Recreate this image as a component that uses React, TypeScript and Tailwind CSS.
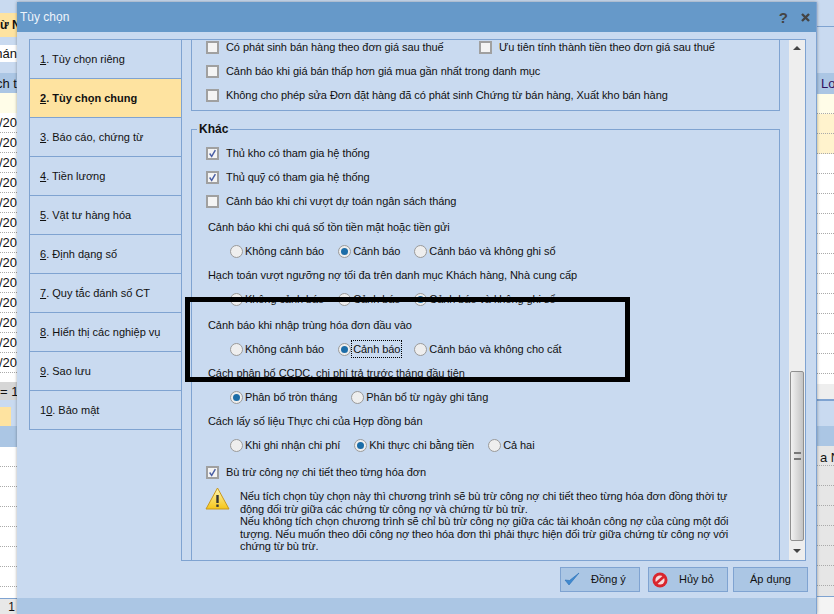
const font = "font-['Liberation_Sans',Arial,sans-serif]"

const navItems = [
  ['1', '. Tùy chọn riêng'],
  ['2', '. Tùy chọn chung'],
  ['3', '. Báo cáo, chứng từ'],
  ['4', '. Tiền lương'],
  ['5', '. Vật tư hàng hóa'],
  ['6', '. Định dạng số'],
  ['7', '. Quy tắc đánh số CT'],
  ['8', '. Hiển thị các nghiệp vụ'],
  ['9', '. Sao lưu'],
]

const Check = ({ on, label, className = '' }: { on?: boolean; label: string; className?: string }) => (
  <div className={`flex items-center h-6 ${className}`}>
    <span className="w-[13px] h-[13px] border-2 border-[#a0a0a0] bg-[#f4f4f4] flex items-center justify-center shrink-0">
      {on && (
        <svg width="11" height="11" viewBox="0 0 11 11">
          <path d="M2 5.5 L4.5 9 L9 1.5" fill="none" stroke="#4a5fa5" strokeWidth="1.8" />
        </svg>
      )}
    </span>
    <span className="ml-[7px] whitespace-nowrap tracking-[-0.07px]">{label}</span>
  </div>
)

const Radio = ({ on, label, focus }: { on?: boolean; label: string; focus?: boolean }) => (
  <div className="flex items-center">
    <span className="w-[13px] h-[13px] rounded-full border border-[#9a9a9a] bg-[#eeeeee] flex items-center justify-center shrink-0">
      {on && <span className="w-[7px] h-[7px] rounded-full bg-[#1c6da8]" />}
    </span>
    <span className={`ml-[1px] px-[1px] whitespace-nowrap tracking-[-0.07px] ${focus ? 'outline-1 outline-dotted outline-black' : ''}`}>{label}</span>
  </div>
)

const RadioRow = ({ children }: { children: React.ReactNode }) => (
  <div className="flex items-center h-6 pl-[38px] gap-[13px]">{children}</div>
)

const Caption = ({ text }: { text: string }) => <div className="h-6 flex items-center pl-[16px] whitespace-nowrap tracking-[-0.07px]">{text}</div>

const DottedRows = ({ count, className = 'bg-white' }: { count: number; className?: string }) => (
  <>
    {Array.from({ length: count }).map((_, i) => (
      <div key={i} className={`h-[20px] shrink-0 border-b border-dotted border-[#aaaaaa] ${className}`} />
    ))}
  </>
)

const LeftStrip = () => (
  <div className="w-[17px] h-full flex flex-col overflow-hidden text-[13px] leading-none text-[#111]">
    <div className="h-[13px] shrink-0 bg-[#c9daf0]" />
    <div className="h-[24px] shrink-0 bg-[#fee3a0] font-bold text-[12px] flex items-center whitespace-nowrap">ừ N</div>
    <div className="h-[8px] shrink-0 bg-[#c9daf0]" />
    <div className="h-[17px] shrink-0 bg-white flex items-center justify-end whitespace-nowrap">hán</div>
    <div className="h-[11px] shrink-0 bg-[#c9daf0]" />
    <div className="h-[20px] shrink-0 bg-[#abc6e4] flex items-center justify-end whitespace-nowrap">ch t</div>
    <div className="h-[20px] shrink-0 bg-[#fffde8]" />
    {Array.from({ length: 13 }).map((_, i) => (
      <div key={i} className="h-[20px] shrink-0 bg-white border-b border-dotted border-[#aaaaaa] flex items-center justify-end whitespace-nowrap">/20</div>
    ))}
    <div className="h-[9px] shrink-0 bg-white" />
    <div className="h-[18px] shrink-0 bg-[#d6d6d6] flex items-center whitespace-nowrap">= 12</div>
    <div className="h-[7px] shrink-0 bg-[#c9daf0]" />
    <div className="h-[19px] shrink-0 bg-[#c9daf0]">
      <div className="h-full w-[11px] bg-[#fee3a0]" />
    </div>
    <div className="h-[21px] shrink-0 bg-[#abc6e4]" />
    <DottedRows count={7} />
    <div className="h-[12px] shrink-0 bg-white border-b border-[#7fa3d1]" />
    <div className="flex-1 bg-[#e8e8e8] flex items-center justify-end pr-[2px] text-[12px]">1</div>
  </div>
)

const RightStrip = () => (
  <div className="w-[17px] h-full flex flex-col overflow-hidden text-[13px] leading-none text-[#111]">
    <div className="h-[27px] shrink-0 bg-[#c9daf0] border-b border-[#7fa3d1]" />
    <div className="h-[46px] shrink-0 bg-[#c9daf0]" />
    <div className="h-[21px] shrink-0 bg-[#abc6e4] flex items-center pl-[4px] whitespace-nowrap text-[#30105c]">Lo</div>
    <DottedRows count={1} className="bg-[#fffde8]" />
    <DottedRows count={2} className="bg-[#fff3cd]" />
    <DottedRows count={11} />
    <div className="h-[10px] shrink-0 bg-white" />
    <div className="h-[15px] shrink-0 bg-[#eeeeee]" />
    <div className="h-[2px] shrink-0 bg-[#7fa3d1]" />
    <div className="h-[25px] shrink-0 bg-[#c9daf0]" />
    <div className="h-[20px] shrink-0 bg-[#abc6e4]" />
    <div className="h-[20px] shrink-0 bg-[#e6e6e6] border-b border-dotted border-[#aaaaaa] flex items-center pl-[3px] pt-[4px] whitespace-nowrap">a N</div>
    <DottedRows count={6} className="bg-[#e6e6e6]" />
    <div className="h-[10px] shrink-0 bg-[#e6e6e6]" />
    <div className="flex-1 bg-[#f4f4f4] border-t border-[#7fa3d1]" />
  </div>
)

export default function App() {
  return (
    <div className={`relative w-[834px] h-[614px] overflow-hidden flex justify-between bg-[#c9daf0] text-[11px] text-[#111] ${font}`}>
      <LeftStrip />
      <RightStrip />

      {/* dialog */}
      <div className="absolute left-[17px] top-[2px] w-[800px] h-[612px] flex flex-col bg-[#c9daf0] border-r border-[#7fa3d1] shadow-[0_0_3px_rgba(0,0,0,0.35)]">
        <div className="h-[30px] shrink-0 bg-[#6699c9] flex items-center justify-between pl-[3px] pr-[6px] text-[#eef4fb] text-[12px]">
          <span>Tùy chọn</span>
          <div className="flex items-center gap-[13px] text-[#444] font-bold text-[15px] leading-none">
            <span>?</span>
            <svg width="9" height="9" viewBox="0 0 9 9">
              <path d="M1 1 L8 8 M8 1 L1 8" stroke="#444" strokeWidth="2.4" />
            </svg>
          </div>
        </div>

        <div className="flex-1 min-h-0 flex pl-[12px] pr-[10px] pt-[7px]">
          <div className="w-[153px] shrink-0 self-start border border-[#7fa3d1] border-r-0">
            {navItems.map(([n, rest], i) => (
              <div key={n} className={`h-[39px] flex items-center pl-[10px] border-b border-[#7fa3d1] whitespace-nowrap ${i === 1 ? 'bg-[#fee3a0] font-bold' : ''}`}>
                <span className="underline">{n}</span>{rest}
              </div>
            ))}
            <div className="h-[38px] flex items-center pl-[10px]">
              1<span className="underline">0</span>. Bảo mật
            </div>
          </div>

          <div className="w-[625px] h-[522px] -ml-px border border-[#7fa3d1] flex overflow-hidden">
            <div className="flex-1 min-w-0 flex flex-col pl-[9px] pr-[9px] overflow-hidden">
              <div className="h-[71px] shrink-0 border border-t-0 border-[#7fa3d1] pl-[14px] flex flex-col">
                <div className="flex items-center -mt-[5px]">
                  <Check className="w-[273px]" label="Có phát sinh bán hàng theo đơn giá sau thuế" />
                  <Check label="Ưu tiên tính thành tiền theo đơn giá sau thuế" />
                </div>
                <Check label="Cảnh báo khi giá bán thấp hơn giá mua gần nhất trong danh mục" />
                <Check label="Không cho phép sửa Đơn đặt hàng đã có phát sinh Chứng từ bán hàng, Xuất kho bán hàng" />
              </div>

              <div className="relative mt-[18px] flex-1 border border-b-0 border-[#7fa3d1] pt-[11px]">
                <span className="absolute left-[5px] -top-[7px] px-[2px] bg-[#c9daf0] font-bold leading-none text-[12px]">Khác</span>
                <div className="pl-[14px]">
                  <Check on label="Thủ kho có tham gia hệ thống" />
                  <Check on label="Thủ quỹ có tham gia hệ thống" />
                  <Check label="Cảnh báo khi chi vượt dự toán ngân sách tháng" />
                </div>
                <div className="mt-[2px]">
                  <Caption text="Cảnh báo khi chi quá số tồn tiền mặt hoặc tiền gửi" />
                  <RadioRow>
                    <Radio label="Không cảnh báo" />
                    <Radio on label="Cảnh báo" />
                    <Radio label="Cảnh báo và không ghi sổ" />
                  </RadioRow>
                  <Caption text="Hạch toán vượt ngưỡng nợ tối đa trên danh mục Khách hàng, Nhà cung cấp" />
                  <RadioRow>
                    <Radio label="Không cảnh báo" />
                    <Radio label="Cảnh báo" />
                    <Radio on label="Cảnh báo và không ghi sổ" />
                  </RadioRow>
                </div>
                <div className="mt-[2px]">
                  <Caption text="Cảnh báo khi nhập trùng hóa đơn đầu vào" />
                  <RadioRow>
                    <Radio label="Không cảnh báo" />
                    <Radio on focus label="Cảnh báo" />
                    <Radio label="Cảnh báo và không cho cất" />
                  </RadioRow>
                  <Caption text="Cách phân bổ CCDC, chi phí trả trước tháng đầu tiên" />
                  <RadioRow>
                    <Radio on label="Phân bổ tròn tháng" />
                    <Radio label="Phân bổ từ ngày ghi tăng" />
                  </RadioRow>
                  <Caption text="Cách lấy số liệu Thực chi của Hợp đồng bán" />
                  <RadioRow>
                    <Radio label="Khi ghi nhận chi phí" />
                    <Radio on label="Khi thực chi bằng tiền" />
                    <Radio label="Cả hai" />
                  </RadioRow>
                </div>
                <Check on className="pl-[14px] mt-[3px]" label="Bù trừ công nợ chi tiết theo từng hóa đơn" />
                <div className="flex mt-[1px] pl-[13px]">
                  <svg width="25" height="23" viewBox="0 0 25 23" className="shrink-0 mt-[2px]">
                    <defs>
                      <linearGradient id="warn" x1="0" y1="0" x2="0" y2="1">
                        <stop offset="0" stopColor="#fff6b0" />
                        <stop offset="1" stopColor="#f5c518" />
                      </linearGradient>
                    </defs>
                    <path d="M12.5 1 L24 22 L1 22 Z" fill="url(#warn)" stroke="#c9971c" strokeLinejoin="round" />
                    <rect x="11.3" y="8" width="2.4" height="8" fill="#333" />
                    <rect x="11.3" y="17.5" width="2.4" height="2.4" fill="#333" />
                  </svg>
                  <p className="ml-[10px] mt-[5px] leading-[12.5px] whitespace-nowrap tracking-[-0.1px]">
                    Nếu tích chọn tùy chọn này thì chương trình sẽ bù trừ công nợ chi tiết theo từng hóa đơn đồng thời tự<br />
                    động đối trừ giữa các chứng từ công nợ và chứng từ bù trừ.<br />
                    Nếu không tích chọn chương trình sẽ chỉ bù trừ công nợ giữa các tài khoản công nợ của cùng một đối<br />
                    tượng. Nếu muốn theo dõi công nợ theo hóa đơn thì phải thực hiện đối trừ giữa chứng từ công nợ với<br />
                    chứng từ bù trừ.
                  </p>
                </div>
              </div>
            </div>

            {/* scrollbar */}
            <div className="w-[16px] shrink-0 bg-[#eeeeee] flex flex-col items-center">
              <div className="h-[16px] flex items-center justify-center">
                <span className="w-0 h-0 border-x-[4px] border-x-transparent border-b-[4px] border-b-[#444]" />
              </div>
              <div className="flex-1" />
              <div className="w-[14px] h-[170px] rounded-[2px] border border-[#909090] bg-gradient-to-r from-[#f2f2f2] to-[#c4c4c4] flex items-center justify-center">
                <div className="w-[7px] h-[8px] border-y-2 border-[#777]" />
              </div>
              <div className="h-[19px] flex items-center justify-center">
                <span className="w-0 h-0 border-x-[4px] border-x-transparent border-t-[4px] border-t-[#444]" />
              </div>
            </div>
          </div>
        </div>

        <div className="absolute left-[543px] top-[565px] flex gap-[8px]">
          <button className="w-[80px] h-[25px] border border-[#7fa3d1] bg-[#abc6e4] flex items-center pl-[3px] text-[#111]">
            <svg width="16" height="15" viewBox="0 0 16 15">
              <path d="M1 8 L5 13 L15 1 L5.5 8.5 Z" fill="#3f8ad0" stroke="#2a6eb5" strokeWidth="0.6" />
            </svg>
            <span className="ml-[11px]">Đồng ý</span>
          </button>
          <button className="w-[80px] h-[25px] border border-[#7fa3d1] bg-[#abc6e4] flex items-center pl-[3px] text-[#111]">
            <svg width="16" height="16" viewBox="0 0 16 16">
              <circle cx="8" cy="8" r="7.5" fill="#d9262e" />
              <circle cx="8" cy="8" r="4.6" fill="#f6dcdc" />
              <path d="M3.5 12 L12.5 4" stroke="#d9262e" strokeWidth="2.6" />
            </svg>
            <span className="ml-[11px]">Hủy bỏ</span>
          </button>
          <button className="w-[75px] h-[25px] -ml-[3px] border border-[#7fa3d1] bg-[#abc6e4] text-center text-[#111]">Áp dụng</button>
        </div>

        <div className="h-[16px] shrink-0 bg-[#abc6e4]" />
      </div>

      {/* black marker box drawn over the screenshot */}
      <div className="absolute left-[185px] top-[297px] w-[445px] h-[85px] border-[5px] border-black" />
    </div>
  )
}
